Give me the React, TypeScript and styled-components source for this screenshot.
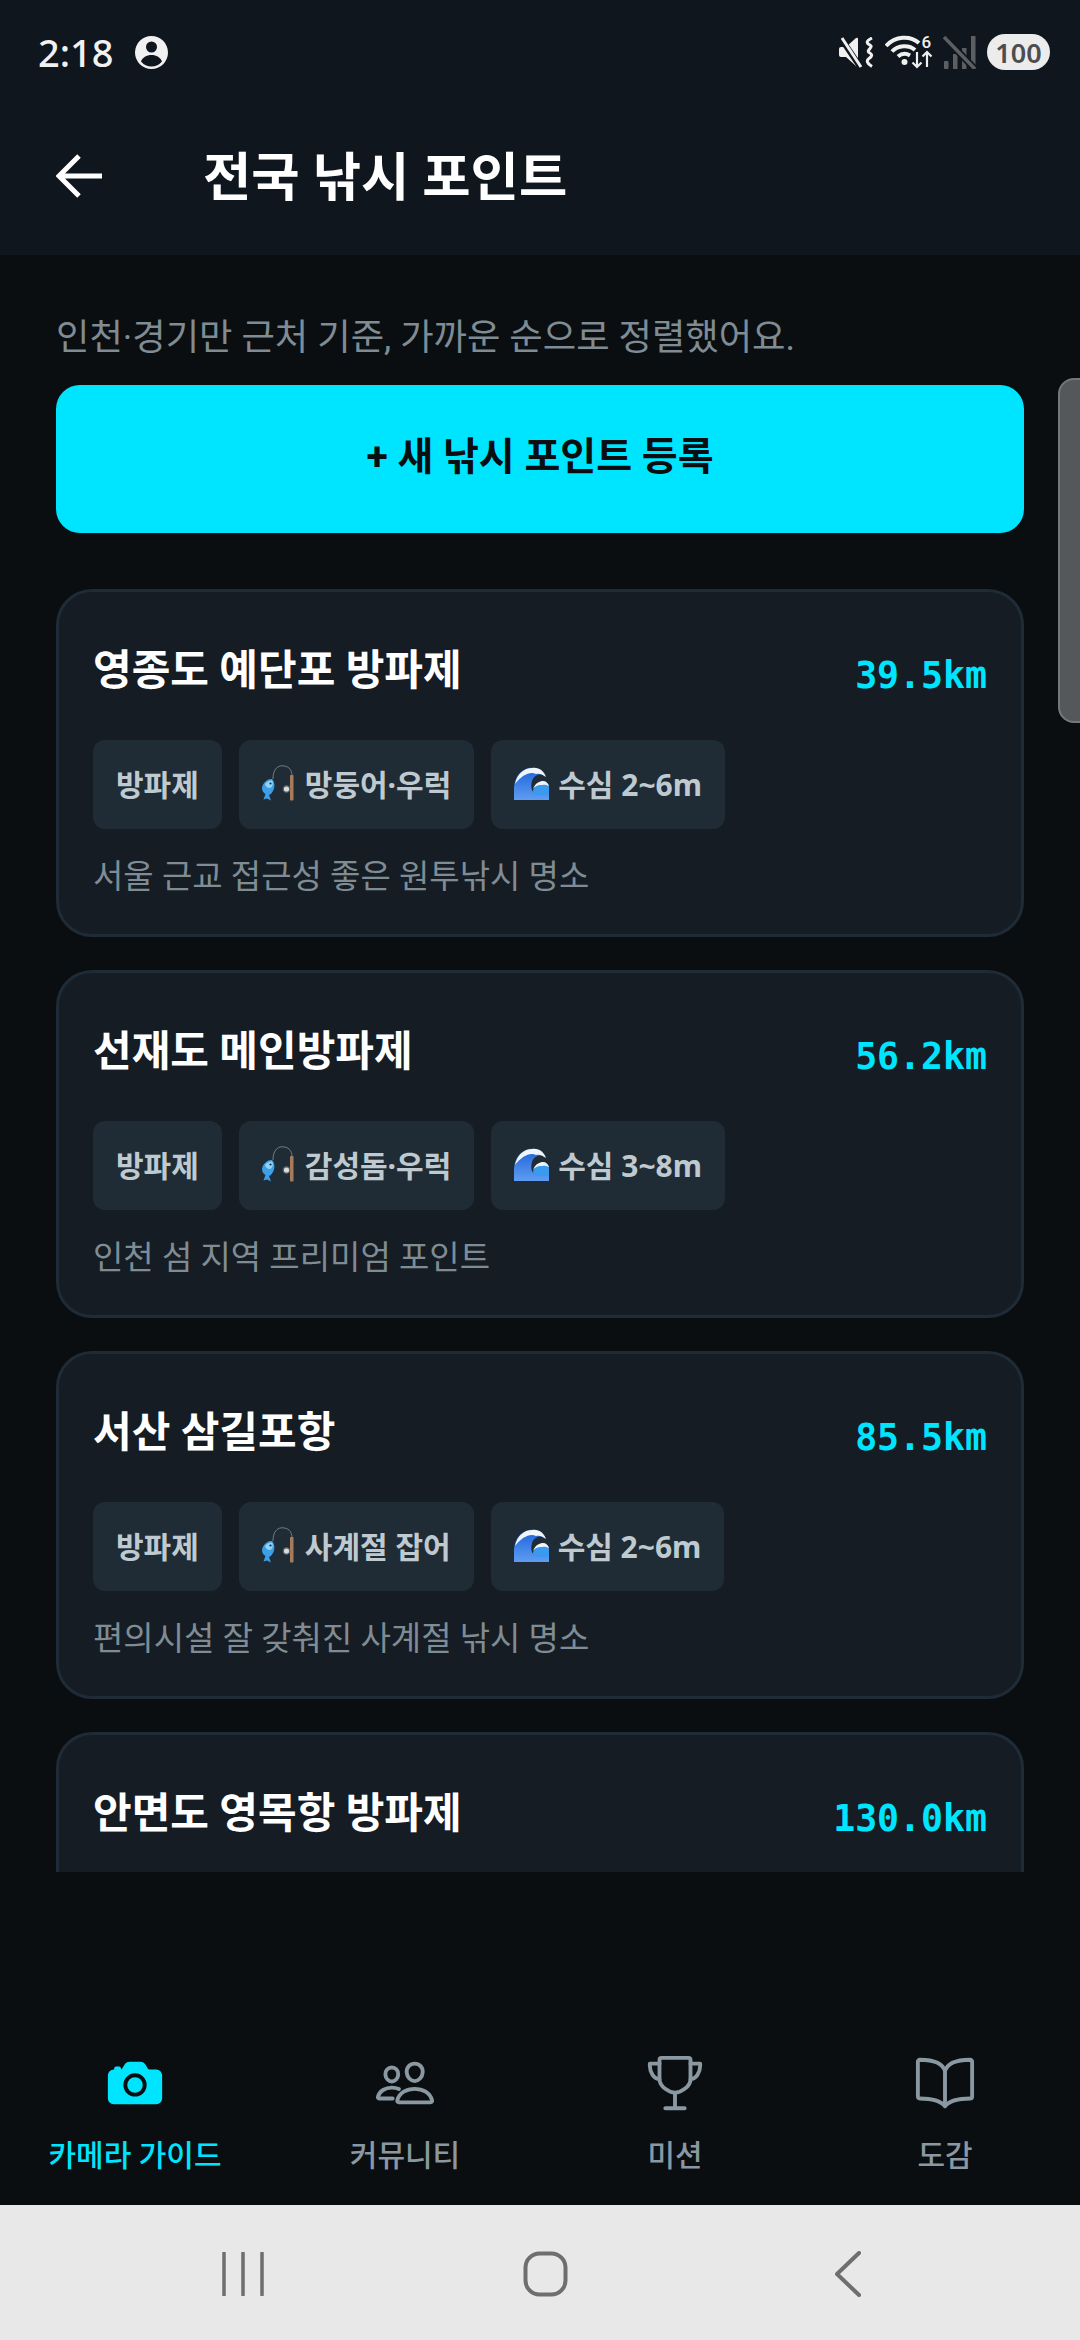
import { createGlobalStyle, styled } from "styled-components";
import { IoCamera, IoPeopleOutline, IoTrophyOutline, IoBookOutline } from "react-icons/io5";

const GlobalStyle = createGlobalStyle`
  html, body {
    margin: 0;
    padding: 0;
    background: #0a0e11;
  }
  * {
    box-sizing: border-box;
  }
`;

const SANS = `Roboto, "Noto Sans CJK KR", "Noto Sans", sans-serif`;

type Spot = {
  name: string;
  km: string;
  fish?: string;
  depth?: string;
  desc?: string;
};

const spots: Spot[] = [
  { name: "영종도 예단포 방파제", km: "39.5km", fish: "망둥어·우럭", depth: "수심 2~6m", desc: "서울 근교 접근성 좋은 원투낚시 명소" },
  { name: "선재도 메인방파제", km: "56.2km", fish: "감성돔·우럭", depth: "수심 3~8m", desc: "인천 섬 지역 프리미엄 포인트" },
  { name: "서산 삼길포항", km: "85.5km", fish: "사계절 잡어", depth: "수심 2~6m", desc: "편의시설 잘 갖춰진 사계절 낚시 명소" },
  { name: "안면도 영목항 방파제", km: "130.0km" },
];

// emoji are not installed here, so the two used in the chips are drawn
const FishingPole = () => (
  <svg width="35" height="36" viewBox="0 0 35 36">
    <path d="M11 14C11 5 15 .8 20 .8C26 .8 30 4 30 11" fill="none" stroke="#777b7e" strokeWidth="1" />
    <rect x="28" y="10" width="3.500" height="25.500" rx=".8" fill="#a77b5a" />
    <circle cx="24.500" cy="24" r="3.200" fill="#d8dadb" stroke="#5a5d60" strokeWidth="1.200" />
    <path d="M0 23C1 17 6 13.500 10 14C13 17 13.500 23 10 27.500C9 29 8 29.500 7 30L9 35.500L5 33.500L1.500 34.500L3.500 29C1.500 28 0 26 0 23Z" fill="#3d9fe8" />
    <path d="M3 19C5 16.500 8 15 10 15.500C11.500 18 11 22 8 23C5 23 3.500 21 3 19Z" fill="#8fd4f7" />
    <circle cx="8.500" cy="18.500" r="1.100" fill="#12304a" />
  </svg>
);

const Wave = () => (
  <svg width="36" height="36" viewBox="0 0 36 36">
    <defs>
      <linearGradient id="waveBody" x1="0" y1="0" x2="0" y2="1">
        <stop offset="0" stopColor="#1c62d8" />
        <stop offset="1" stopColor="#5f9df2" />
      </linearGradient>
    </defs>
    <path d="M0 35V22C1 12 6 5 15 3C22 2 28 5 31 11C26 8 20 10 18 16C16 23 18 28 24 30H35V35Z" fill="url(#waveBody)" />
    <path d="M1 19C3 9 10 3 18 3C25 2 30 6 32 12C28 9 25 8 22 9C16 6 8 10 1 19Z" fill="#f0f5fa" />
    <path d="M19 26C20 20 25 17 30 17C32 17 35 19 35 22V30H24C21 30 19 28 19 26Z" fill="#3a9bee" />
    <path d="M19 24C21 18 26 16 29 16C32 16 34 18 35 21C31 19 28 20 26 20C24 20 21 21 19 24Z" fill="#eef4fa" />
  </svg>
);

const App = () => {
  return (
    <Screen>
      <GlobalStyle />
      <TopArea>
        <StatusBar>
          <StatusLeft>
            <Clock>2:18</Clock>
            <svg width="33" height="33" viewBox="0 0 33 33">
              <path
                fillRule="evenodd"
                d="M16.500 0a16.500 16.500 0 1 0 0 33a16.500 16.500 0 0 0 0-33ZM16.500 5.500a5.500 5.500 0 1 1 0 11a5.500 5.500 0 0 1 0-11ZM6 25.500c1.500-4 5.500-6.500 10.500-6.500s9 2.500 10.500 6.500a13.500 13.500 0 0 1-21 0Z"
                fill="#f1f1f1"
              />
            </svg>
          </StatusLeft>
          <StatusRight>
            <svg width="35" height="31" viewBox="0 0 35 31">
              <path d="M0 12q0-2 2-2h5l10-9q2-1 2 1v26q0 2-2 1l-10-9H2q-2 0-2-2Z" fill="#f0f0f0" />
              <path d="M1 0l21 31" stroke="#10161d" strokeWidth="6" />
              <path d="M3 1l19 29" stroke="#f0f0f0" strokeWidth="3" />
              <path d="M33 1c-6 3-6 5-2 7c4 2-4 5-1 7.500c4 2 3 4 0 6c-3 2-2 5 3 8" fill="none" stroke="#f0f0f0" strokeWidth="3" />
            </svg>
            <WifiIcon width="48" height="40" viewBox="0 -6 48 40">
              <path d="M1 11C10 1 25 0 34 8" fill="none" stroke="#f0f0f0" strokeWidth="4" />
              <path d="M7 16.500C13 10 24 9.500 30 15" fill="none" stroke="#f0f0f0" strokeWidth="4" />
              <path d="M13 21.500C17 18 21 18 25 20.500" fill="none" stroke="#f0f0f0" strokeWidth="4" />
              <circle cx="19.500" cy="27" r="3" fill="#f0f0f0" />
              <path d="M32 17v15M27.500 27.500l4.500 4.500l4.500-4.500M42 32V17M37.500 21.500l4.500-4.500l4.500 4.500" fill="none" stroke="#f0f0f0" strokeWidth="2.200" />
              <text x="36.500" y="13" fontSize="17" fontWeight="500" fontFamily="Roboto, sans-serif" fill="#f0f0f0">6</text>
            </WifiIcon>
            <svg width="33" height="33" viewBox="0 0 33 33">
              <rect x="1" y="25" width="4.500" height="8" rx="1" fill="#5c5f62" />
              <rect x="10" y="18" width="4.500" height="15" fill="#5c5f62" />
              <rect x="19" y="12" width="4.500" height="21" fill="#5c5f62" />
              <rect x="28" y="0" width="4.500" height="33" fill="#5c5f62" />
              <path d="M1 1l31 32" stroke="#10161d" strokeWidth="7" />
              <path d="M1 1l31 32" stroke="#5c5f62" strokeWidth="3.500" />
            </svg>
            <Battery>100</Battery>
          </StatusRight>
        </StatusBar>
        <Header>
          <BackButton>
            <svg width="46" height="46" viewBox="0 0 46 46">
              <path d="M46 23H4M23 3L3 23l20 20" fill="none" stroke="#fff" strokeWidth="5" />
            </svg>
          </BackButton>
          <HeaderTitle>전국 낚시 포인트</HeaderTitle>
        </Header>
      </TopArea>

      <Main>
        <Intro>인천·경기만 근처 기준, 가까운 순으로 정렬했어요.</Intro>
        <AddButton>+ 새 낚시 포인트 등록</AddButton>
        <CardList>
          {spots.map((spot) => (
            <Card key={spot.name}>
              <CardHead>
                <CardTitle>{spot.name}</CardTitle>
                <Distance>{spot.km}</Distance>
              </CardHead>
              {spot.fish && (
                <ChipRow>
                  <Chip>방파제</Chip>
                  <Chip>
                    <FishingPole />
                    {spot.fish}
                  </Chip>
                  <Chip>
                    <Wave />
                    {spot.depth}
                  </Chip>
                </ChipRow>
              )}
              {spot.desc && <CardDesc>{spot.desc}</CardDesc>}
            </Card>
          ))}
        </CardList>
        <ScrollThumb />
      </Main>

      <BottomNav>
        <NavItem $active>
          <IoCamera size={62} />
          <NavLabel>카메라 가이드</NavLabel>
        </NavItem>
        <NavItem>
          <IoPeopleOutline size={62} />
          <NavLabel>커뮤니티</NavLabel>
        </NavItem>
        <NavItem>
          <IoTrophyOutline size={62} />
          <NavLabel>미션</NavLabel>
        </NavItem>
        <NavItem>
          <IoBookOutline size={62} />
          <NavLabel>도감</NavLabel>
        </NavItem>
      </BottomNav>

      <SystemBar>
        <svg width="42" height="44" viewBox="0 0 42 44">
          <path d="M2 1v42M21 1v42M40 1v42" stroke="#6e6e6e" strokeWidth="3.500" strokeLinecap="round" fill="none" />
        </svg>
        <svg width="54" height="46" viewBox="0 0 54 46">
          <rect x="2.500" y="2.500" width="40" height="41" rx="14" fill="none" stroke="#6e6e6e" strokeWidth="4" />
        </svg>
        <svg width="26" height="46" viewBox="0 0 26 46">
          <path d="M24 2L2 23l22 21" fill="none" stroke="#6e6e6e" strokeWidth="4" strokeLinecap="round" strokeLinejoin="round" />
        </svg>
      </SystemBar>
    </Screen>
  );
};

export default App;

const Screen = styled.div`
  width: 1080px;
  height: 2340px;
  display: flex;
  flex-direction: column;
  background: #0a0e11;
  font-family: ${SANS};
  overflow: hidden;
`;

const TopArea = styled.div`
  height: 255px;
  flex-shrink: 0;
  background: #10161d;
`;

const StatusBar = styled.div`
  height: 104px;
  padding: 0 30px 0 38px;
  display: flex;
  align-items: center;
  justify-content: space-between;
`;

const StatusLeft = styled.div`
  display: flex;
  align-items: center;
  gap: 21px;
`;

const Clock = styled.span`
  font-family: "Noto Sans", sans-serif;
  font-size: 38px;
  font-weight: 500;
  color: #f1f1f1;
`;

const StatusRight = styled.div`
  display: flex;
  align-items: center;
  gap: 11px;
`;

const WifiIcon = styled.svg`
  margin: -6px -1px 0 0;
`;

const Battery = styled.span`
  width: 63px;
  height: 36px;
  border-radius: 18px;
  background: #ececec;
  color: #4d4d4f;
  font-family: "Noto Sans", sans-serif;
  font-size: 27px;
  font-weight: 600;
  display: flex;
  align-items: center;
  justify-content: center;
`;

const Header = styled.div`
  height: 151px;
  padding: 0 0 14px 56px;
  display: flex;
  align-items: center;
`;

const BackButton = styled.div`
  width: 147px;
  margin-top: 6px;
  display: flex;
  align-items: center;
`;

const HeaderTitle = styled.h1`
  margin: 12px 0 0;
  color: #fff;
  font-size: 52.500px;
  font-weight: 700;
  line-height: 1;
`;

const Main = styled.div`
  position: relative;
  flex: 1;
  min-height: 0;
  padding: 0 56px;
  display: flex;
  flex-direction: column;
  overflow: hidden;
`;

const Intro = styled.p`
  margin: 0;
  height: 130px;
  padding-top: 59px;
  color: #7f8c94;
  font-size: 36.300px;
  line-height: 48px;
`;

const AddButton = styled.button`
  height: 148px;
  flex-shrink: 0;
  padding: 0 0 12px;
  border: none;
  border-radius: 24px;
  background: #00e5ff;
  color: #0a0e11;
  font-family: ${SANS};
  font-size: 39px;
  font-weight: 700;
`;

const CardList = styled.div`
  margin-top: 56px;
  height: 1283px;
  flex-shrink: 0;
  display: flex;
  flex-direction: column;
  gap: 33px;
  overflow: hidden;
`;

const Card = styled.div`
  height: 348px;
  flex-shrink: 0;
  padding: 0 34px;
  border: 3px solid #1f2b36;
  border-radius: 36px;
  background: #151c23;
`;

const CardHead = styled.div`
  height: 148px;
  display: flex;
  align-items: center;
  justify-content: space-between;
`;

const CardTitle = styled.h2`
  margin: 9px 0 0;
  color: #fff;
  font-size: 42px;
  font-weight: 700;
  line-height: 1;
`;

const Distance = styled.span`
  margin-top: 18px;
  color: #00e5ff;
  font-family: "DejaVu Sans Mono", "Liberation Mono", monospace;
  font-size: 36.500px;
  font-weight: 700;
`;

const ChipRow = styled.div`
  display: flex;
  gap: 17px;
`;

const Chip = styled.span`
  height: 89px;
  padding: 0 23px 4px;
  border-radius: 12px;
  background: #202c35;
  color: #bfcad0;
  font-family: "Noto Sans", "Noto Sans CJK KR", sans-serif;
  font-size: 30px;
  font-weight: 700;
  display: flex;
  align-items: center;
  gap: 8px;
`;

const CardDesc = styled.p`
  margin: 24px 0 0;
  color: #7f8c94;
  font-size: 33px;
  line-height: 48px;
`;

const ScrollThumb = styled.div`
  position: absolute;
  left: 1058px;
  top: 123px;
  width: 40px;
  height: 345px;
  border: 2px solid #74787b;
  border-radius: 16px;
  background: #54585b;
`;

const BottomNav = styled.nav`
  height: 206px;
  flex-shrink: 0;
  padding-top: 53px;
  display: grid;
  grid-template-columns: repeat(4, 1fr);
  background: #0a0e11;
`;

const NavItem = styled.div<{ $active?: boolean }>`
  display: flex;
  flex-direction: column;
  align-items: center;
  gap: 18px;
  color: ${(p) => (p.$active ? "#00e5ff" : "#8a98a1")};
`;

const NavLabel = styled.span`
  font-size: 30px;
  font-weight: 500;
  line-height: 48px;
`;

const SystemBar = styled.div`
  height: 135px;
  flex-shrink: 0;
  padding: 3px 219px 0 222px;
  display: flex;
  align-items: center;
  justify-content: space-between;
  background: #e8e8e8;
`;
